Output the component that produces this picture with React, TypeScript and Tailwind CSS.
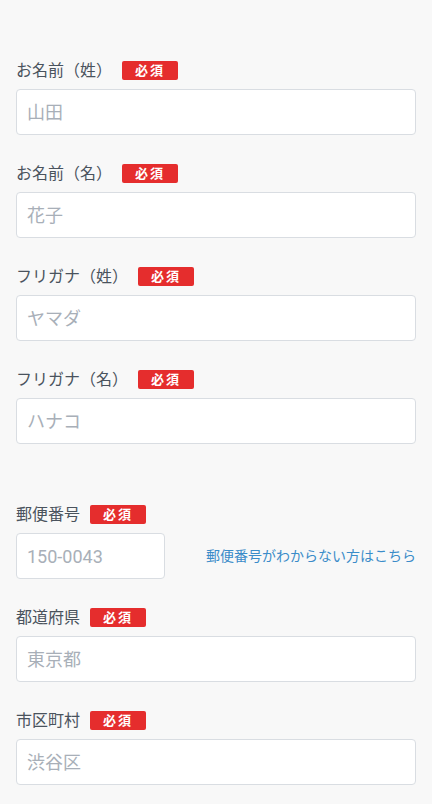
import React from "react";

const font = { fontFamily: 'Roboto, "Noto Sans CJK JP", sans-serif' };

function Badge() {
  return (
    <span className="ml-[10px] inline-flex h-[19px] w-[56px] items-center justify-center rounded-[2px] bg-[#e52d2d] text-[13px] font-bold leading-none tracking-[2px] text-white">
      必須
    </span>
  );
}

function Label({ text }: { text: string }) {
  return (
    <div className="mb-[6px] flex h-[25px] items-center">
      <span className="text-[16px] leading-[25px] text-[#4a535d]">{text}</span>
      <Badge />
    </div>
  );
}

function Field({ label, placeholder }: { label: string; placeholder: string }) {
  return (
    <div className="flex flex-col">
      <Label text={label} />
      <input
        className="h-[46px] w-full rounded-[4px] border border-[#d9dde2] bg-white px-[10px] text-[18px] text-[#333] outline-none placeholder:text-[#a8afb8]"
        placeholder={placeholder}
        style={font}
      />
    </div>
  );
}

export default function App() {
  return (
    <div className="min-h-screen bg-[#f8f8f8] px-4 pt-[58px] pb-10" style={font}>
      <div className="flex flex-col gap-[26px]">
        <Field label="お名前（姓）" placeholder="山田" />
        <Field label="お名前（名）" placeholder="花子" />
        <Field label="フリガナ（姓）" placeholder="ヤマダ" />
        <Field label="フリガナ（名）" placeholder="ハナコ" />
      </div>
      <div className="mt-[58px] flex flex-col gap-[26px]">
        <div className="flex flex-col">
          <Label text="郵便番号" />
          <div className="flex items-center justify-between">
            <input
              className="h-[46px] w-[149px] rounded-[4px] border border-[#d9dde2] bg-white px-[10px] text-[18px] text-[#333] outline-none placeholder:text-[#a8afb8]"
              placeholder="150-0043"
              style={font}
            />
            <a className="text-[14px] leading-[20px] text-[#3b8cc9]">
              郵便番号がわからない方はこちら
            </a>
          </div>
        </div>
        <Field label="都道府県" placeholder="東京都" />
        <Field label="市区町村" placeholder="渋谷区" />
      </div>
    </div>
  );
}
